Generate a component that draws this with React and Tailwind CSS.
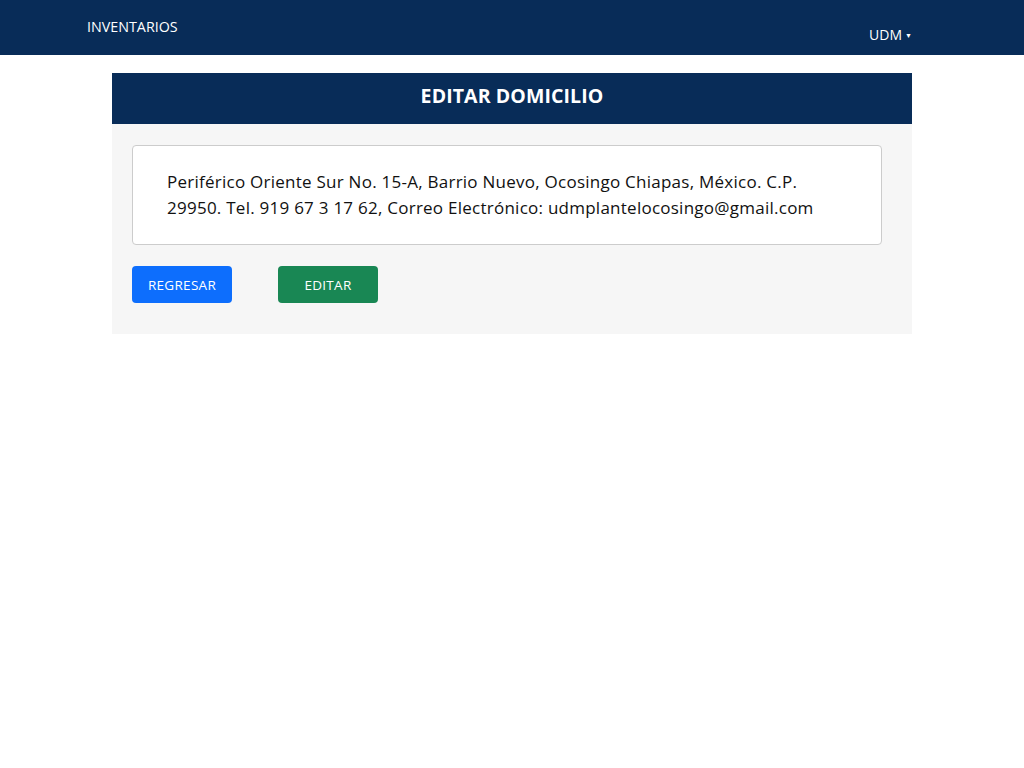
import React from 'react';

const App = () => {
    return (
        <div className="min-h-screen bg-white text-black" style={{ fontFamily: '"Open Sans", "Liberation Sans", sans-serif' }}>
            {/* barra superior */}
            <nav className="h-[55px] bg-[#082c58] flex justify-between pl-[87px] pr-[112px]">
                <a className="text-white text-[14.3px] pt-[18px] leading-[18px]">INVENTARIOS</a>
                <div className="text-white text-[14px] pt-[26px] leading-[18px] flex items-center h-min gap-[3px]">
                    UDM
                    <span className="text-[7px] leading-none mt-[1px]">▼</span>
                </div>
            </nav>

            <div className="w-[800px] ml-[112px] mt-[18px]">
                <div className="h-[51px] bg-[#082c58] flex items-center justify-center pb-[5px]">
                    <h1 className="text-white font-bold text-[19.5px] tracking-[0.1px]">EDITAR DOMICILIO</h1>
                </div>
                <div className="bg-[#f6f6f6] pl-[20px] pr-[30px] pt-[21px] pb-[31px]">
                    <div className="bg-white border border-[#cccccc] rounded-[4px] h-[100px] pl-[34px] pr-[10px] pt-[23px]">
                        <p className="text-[17px] leading-[26px] tracking-[0.25px] text-[#111]">
                            Periférico Oriente Sur No. 15-A, Barrio Nuevo, Ocosingo Chiapas, México. C.P.
                            <br />
                            29950. Tel. 919 67 3 17 62, Correo Electrónico: udmplantelocosingo@gmail.com
                        </p>
                    </div>
                    <div className="flex gap-[46px] mt-[21px]">
                        <button className="w-[100px] h-[37px] pt-[2px] rounded-[4px] bg-[#0d6efd] text-white text-[13.5px] font-medium tracking-[0.3px]">REGRESAR</button>
                        <button className="w-[100px] h-[37px] pt-[2px] rounded-[4px] bg-[#198754] text-white text-[13.5px] font-medium tracking-[0.3px]">EDITAR</button>
                    </div>
                </div>
            </div>
        </div>
    );
};

export default App;
